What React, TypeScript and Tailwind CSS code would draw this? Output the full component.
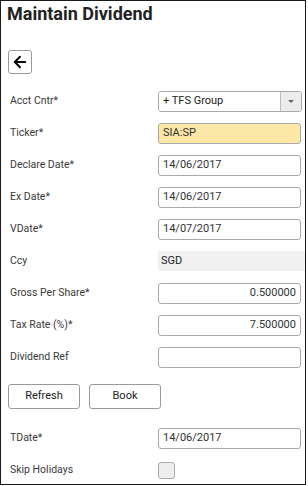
import { ArrowLeft } from 'lucide-react';

const font = { fontFamily: 'Roboto, "Liberation Sans", sans-serif' };

function Row({ label, children }: { label: string; children: React.ReactNode }) {
    return (
        <div className="h-[32px] flex items-center shrink-0">
            <div className="w-[157px] pl-[9px] text-[10.5px] text-[#3a3a3a]">{label}</div>
            {children}
        </div>
    );
}

function TextBox({ value, right, yellow }: { value?: string; right?: boolean; yellow?: boolean }) {
    return (
        <div
            className={`w-[143px] h-[21px] border border-[#a9a9a9] rounded-[3px] px-[4px] flex items-center text-[11px] text-[#333] ${right ? 'justify-end' : ''} ${yellow ? 'bg-[#fce8a6]' : 'bg-white'}`}
        >
            {value}
        </div>
    );
}

export default function App() {
    return (
        <div style={font} className="w-[306px] h-[485px] border border-[#1a1a1a] bg-white flex flex-col overflow-hidden">
            {/* Header */}
            <div className="pl-[6px] pt-[1px] h-[24px] text-[18px] leading-[24px] font-bold text-[#222]">
                Maintain Dividend
            </div>

            <div className="pl-[7px] mt-[25px]">
                <button className="w-[24px] h-[24px] border border-[#9a9a9a] rounded-[3px] flex items-center justify-center bg-white">
                    <ArrowLeft className="w-[18px] h-[18px] text-black" strokeWidth={2.5} />
                </button>
            </div>

            {/* Form rows */}
            <div className="mt-[11px] flex flex-col">
                <Row label="Acct Cntr*">
                    <div className="w-[144px] h-[21px] border border-[#a9a9a9] rounded-[3px] flex items-stretch overflow-hidden">
                        <div className="flex-1 px-[4px] flex items-center text-[11px] text-[#222] bg-white">+ TFS Group</div>
                        <div className="w-[21px] border-l border-[#bdbdbd] bg-[#ececec] flex items-center justify-center">
                            <div className="w-0 h-0 border-l-[3px] border-r-[3px] border-t-[3px] border-l-transparent border-r-transparent border-t-[#666]" />
                        </div>
                    </div>
                </Row>
                <Row label="Ticker*">
                    <TextBox value="SIA:SP" yellow />
                </Row>
                <Row label="Declare Date*">
                    <TextBox value="14/06/2017" />
                </Row>
                <Row label="Ex Date*">
                    <TextBox value="14/06/2017" />
                </Row>
                <Row label="VDate*">
                    <TextBox value="14/07/2017" />
                </Row>
                <Row label="Ccy">
                    <div className="flex-1 h-[20px] bg-[#f1f1f1] px-[3px] flex items-center text-[11px] text-[#222]">SGD</div>
                </Row>
                <Row label="Gross Per Share*">
                    <TextBox value="0.500000" right />
                </Row>
                <Row label="Tax Rate (%)*">
                    <TextBox value="7.500000" right />
                </Row>
                <Row label="Dividend Ref">
                    <TextBox />
                </Row>
            </div>

            {/* Actions */}
            <div className="mt-[11px] pl-[7px] flex gap-[9px]">
                <button className="w-[72px] h-[25px] border border-[#9a9a9a] rounded-[3px] bg-white text-[11px] text-[#222]">
                    Refresh
                </button>
                <button className="w-[72px] h-[25px] border border-[#9a9a9a] rounded-[3px] bg-white text-[11px] text-[#222]">
                    Book
                </button>
            </div>

            <div className="mt-[13px] flex flex-col">
                <Row label="TDate*">
                    <TextBox value="14/06/2017" />
                </Row>
                <Row label="Skip Holidays">
                    <div className="w-[17px] h-[17px] border border-[#a9a9a9] rounded-[3px] bg-[#eeeeee]" />
                </Row>
            </div>
        </div>
    );
}
